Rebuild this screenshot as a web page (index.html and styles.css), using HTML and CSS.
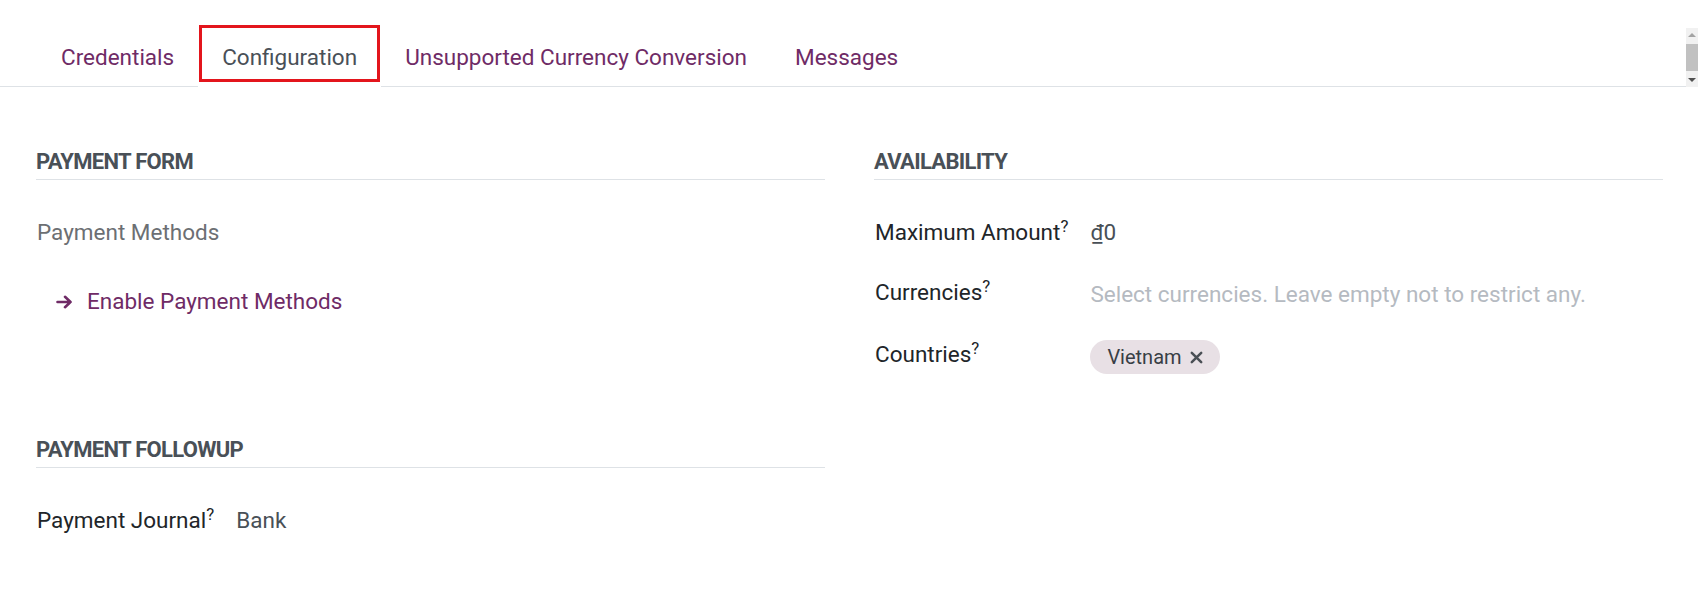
FILE: index.html
```html
<!DOCTYPE HTML>
<html lang="en-US">
<head>
	<meta charset="UTF-8">
	<title>Payment Provider: Configuration</title>
	<link rel="stylesheet" href="styles.css">
</head>
<body>
	<div class="tabs">
		<nav class="tab-list">
			<a class="tab" href="#">Credentials</a>
			<a class="tab active" href="#">Configuration</a>
			<a class="tab" href="#">Unsupported Currency Conversion</a>
			<a class="tab" href="#">Messages</a>
		</nav>
		<div class="scrollbar">
			<span class="arrow up"></span>
			<span class="thumb"></span>
			<span class="arrow down"></span>
		</div>
	</div>

	<div class="sheet">
		<div class="col">
			<section class="group">
				<h3 class="group-title">Payment Form</h3>
				<div class="muted-label">Payment Methods</div>
				<a class="btn-link" href="#">
					<svg class="arrow-icon" width="17" height="14" viewBox="0 0 17 14"><path d="M1.5 7h13M9 1.8l5.5 5.2L9 12.2" fill="none" stroke="currentColor" stroke-width="2.6" stroke-linecap="round" stroke-linejoin="round"/></svg>
					Enable Payment Methods
				</a>
			</section>

			<section class="group followup">
				<h3 class="group-title">Payment Followup</h3>
				<div class="fields">
					<label>Payment Journal<sup>?</sup></label>
					<span class="value">Bank</span>
				</div>
			</section>
		</div>

		<div class="col">
			<section class="group">
				<h3 class="group-title">Availability</h3>
				<div class="fields">
					<label>Maximum Amount<sup>?</sup></label>
					<span class="value amount">&#8363;0</span>

					<label>Currencies<sup>?</sup></label>
					<span class="placeholder">Select currencies. Leave empty not to restrict any.</span>

					<label>Countries<sup>?</sup></label>
					<span class="tags">
						<span class="tag">Vietnam
							<svg class="tag-close" width="13" height="13" viewBox="0 0 13 13"><path d="M1.8 1.8l9.4 9.4M11.2 1.8l-9.4 9.4" stroke="currentColor" stroke-width="2.5" stroke-linecap="round"/></svg>
						</span>
					</span>
				</div>
			</section>
		</div>
	</div>
</body>
</html>
```

FILE: styles.css
```css
body, html {
	margin: 0;
	padding: 0;
	background: #fff;
	font: 22.5px/33px Roboto, "Liberation Sans", sans-serif;
	color: #212529;
}

/* Tab header */

.tabs {
	display: flex;
	align-items: flex-start;
}

.tab-list {
	flex: 1;
	display: flex;
	padding: 24px 0 0 37px;
	border-bottom: 1px solid #dee2e6;
}

.tab {
	display: block;
	padding: 16px 23px 12px;
	border: 1px solid transparent;
	margin-bottom: -1px;
	color: #6f2b66;
	text-decoration: none;
}

.tab.active {
	position: relative;
	color: #495057;
	border-bottom-color: #fff;
	background: #fff;
}

/* annotation frame drawn over the active tab */
.tab.active:after {
	content: "";
	position: absolute;
	left: 0;
	right: 0;
	top: 0;
	bottom: 4px;
	border: 3px solid #e3151c;
}

.scrollbar {
	width: 12px;
	margin-top: 28px;
	height: 59px;
	background: #f1f1f1;
	display: flex;
	flex-direction: column;
	align-items: center;
}

.scrollbar .thumb {
	width: 12px;
	flex: 1;
	background: #c1c1c1;
	margin: 2px 0;
}

.scrollbar .arrow {
	width: 0;
	height: 0;
	border-left: 4px solid transparent;
	border-right: 4px solid transparent;
	margin: 5px 0;
}

.scrollbar .up {
	border-bottom: 4px solid #a3a3a3;
}

.scrollbar .down {
	border-top: 4px solid #505050;
}

/* Sheet */

.sheet {
	display: grid;
	grid-template-columns: 1fr 1fr;
	column-gap: 49px;
	padding: 58px 35px 0 36px;
}

.group-title {
	margin: 0 0 36px;
	padding-bottom: 1px;
	font-size: 22px;
	font-weight: bold;
	letter-spacing: -0.7px;
	text-transform: uppercase;
	color: #495057;
	border-bottom: 1px solid #dee2e6;
}

.muted-label {
	color: #6c6f73;
	padding-left: 1px;
}

.btn-link {
	display: inline-flex;
	align-items: center;
	margin-top: 36px;
	padding-left: 20px;
	color: #6f2b66;
	text-decoration: none;
}

.arrow-icon {
	margin: 1px 14px 0 0;
}

.followup {
	margin-top: 115px;
}

.fields {
	display: grid;
	grid-template-columns: max-content 1fr;
	column-gap: 22px;
	row-gap: 27px;
	align-items: start;
}

.fields label {
	padding-left: 1px;
}

sup {
	font-size: 0.75em;
	line-height: 0;
	color: #212529;
}

.value {
	color: #495057;
}

.placeholder {
	color: #b5bac1;
	padding-top: 2px;
}

.tag {
	display: inline-flex;
	align-items: center;
	margin-top: 2px;
	padding: 0 17px;
	height: 34px;
	border-radius: 17px;
	background: #e8e0e5;
	color: #383e45;
	font-size: 20px;
}

.tag-close {
	margin-left: 8px;
	color: #4a4f55;
}
```
